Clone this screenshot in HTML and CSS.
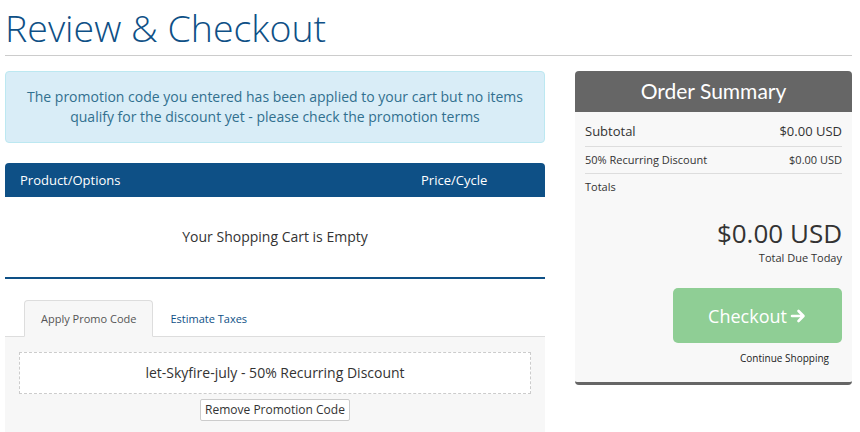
FILE: index.html
```html
<!DOCTYPE html>
<html lang="en">
<head>
    <meta charset="UTF-8">
    <meta name="viewport" content="width=device-width, initial-scale=1.0">
    <title>Review &amp; Checkout</title>
    <link rel="stylesheet" href="styles.css">
</head>
<body>

    <div class="page">
        <h1 class="page-title">Review &amp; Checkout</h1>

        <div class="checkout">
            <div class="cart">
                <div class="alert-info">
                    The promotion code you entered has been applied to your cart but no items
                    qualify for the discount yet - please check the promotion terms
                </div>

                <div class="cart-head">
                    <span class="col-product">Product/Options</span>
                    <span class="col-price">Price/Cycle</span>
                </div>
                <div class="cart-empty">Your Shopping Cart is Empty</div>

                <div class="tabs">
                    <span class="tab active">Apply Promo Code</span>
                    <span class="tab">Estimate Taxes</span>
                </div>
                <div class="tab-body">
                    <div class="promo-box">let-Skyfire-july - 50% Recurring Discount</div>
                    <button class="btn-remove" type="button">Remove Promotion Code</button>
                </div>
            </div>

            <div class="summary">
                <div class="summary-head">Order Summary</div>
                <div class="summary-body">
                    <div class="row row-sub">
                        <span>Subtotal</span>
                        <span>$0.00 USD</span>
                    </div>
                    <div class="row row-small">
                        <span>50% Recurring Discount</span>
                        <span>$0.00 USD</span>
                    </div>
                    <div class="row row-small row-last">
                        <span>Totals</span>
                    </div>
                    <div class="total">
                        <div class="total-amount">$0.00 USD</div>
                        <div class="total-label">Total Due Today</div>
                    </div>
                    <div class="actions">
                        <button class="btn-checkout" type="button">Checkout
                            <svg class="arrow" width="17" height="16" viewBox="0 0 17 16">
                                <path d="M2 8h11M8.5 3l5 5-5 5" fill="none" stroke="#fff" stroke-width="2.6" stroke-linecap="round" stroke-linejoin="round"/>
                            </svg>
                        </button>
                        <a class="continue" href="#">Continue Shopping</a>
                    </div>
                </div>
            </div>
        </div>
    </div>

</body>
</html>
```

FILE: styles.css
```css
body {
    margin: 0;
    font-family: "Open Sans", Arial, sans-serif;
    color: #333;
    background: #fff;
}
.page {
    padding: 0 8px 0 5px;
}
.page-title {
    font-family: "Open Sans", Lato, sans-serif;
    font-weight: 300;
    font-size: 37.5px;
    color: #0e5086;
    margin: 0;
    padding: 8px 0 7px 0;
    line-height: 40px;
    border-bottom: 1px solid #ccc;
}
.checkout {
    display: flex;
    gap: 30px;
    margin-top: 15px;
}
.cart {
    width: 540px;
}
.alert-info {
    background: #d9edf7;
    border: 1px solid #bce8f1;
    border-radius: 4px;
    color: #31708f;
    font-size: 14px;
    line-height: 20px;
    text-align: center;
    padding: 15px 18px;
}
.cart-head {
    display: flex;
    margin-top: 20px;
    background: #0e5086;
    color: #fff;
    font-size: 13px;
    height: 34px;
    align-items: center;
    border-radius: 4px 4px 0 0;
}
.col-product {
    flex: 1;
    padding-left: 15px;
}
.col-price {
    width: 124px;
}
.cart-empty {
    text-align: center;
    font-size: 14px;
    padding: 30px 0;
    line-height: 20px;
    border-bottom: 2px solid #0e5086;
}
.tabs {
    display: flex;
    margin-top: 21px;
    padding-left: 19px;
    border-bottom: 1px solid #ddd;
}
.tab {
    font-size: 11px;
    padding: 0 16px;
    line-height: 35px;
    color: #0e5086;
    border: 1px solid transparent;
    border-radius: 4px 4px 0 0;
    margin-bottom: -1px;
}
.tab.active {
    background: #f7f7f7;
    border-color: #ddd;
    border-bottom-color: #f7f7f7;
    color: #555;
}
.tab-body {
    background: #f7f7f7;
    padding: 15px 14px 12px;
    text-align: center;
}
.promo-box {
    background: #fff;
    border: 1px dashed #ccc;
    font-size: 14px;
    line-height: 20px;
    padding: 10px 0;
}
.btn-remove {
    margin-top: 5px;
    font-family: "Open Sans", Arial, sans-serif;
    font-size: 12px;
    color: #333;
    background: #fff;
    border: 1px solid #ccc;
    border-radius: 2px;
    padding: 3px 4px;
    line-height: 14px;
}
.summary {
    width: 277px;
    align-self: flex-start;
    border-radius: 4px;
    border-bottom: 3px solid #666;
    background: #f8f8f8;
}
.summary-head {
    background: #666;
    color: #fff;
    font-family: Lato, "Open Sans", sans-serif;
    font-weight: 400;
    font-size: 21px;
    text-align: center;
    height: 41px;
    line-height: 40px;
    border-radius: 4px 4px 0 0;
}
.summary-body {
    padding: 5px 10px 17px;
}
.row {
    display: flex;
    justify-content: space-between;
    border-bottom: 1px solid #ddd;
}
.row-sub {
    font-size: 13px;
    line-height: 29px;
}
.row-small {
    font-size: 11px;
    line-height: 26px;
}
.row-last {
    border-bottom: none;
}
.total {
    text-align: right;
    padding-top: 16px;
}
.total-amount {
    font-size: 26px;
    line-height: 34px;
}
.total-label {
    font-size: 11px;
    line-height: 16px;
}
.actions {
    text-align: right;
    padding-top: 22px;
}
.btn-checkout {
    width: 169px;
    height: 55px;
    background: #8fce95;
    border: none;
    border-radius: 5px;
    color: #fff;
    font-family: "Open Sans", Arial, sans-serif;
    font-size: 18px;
    display: inline-flex;
    align-items: center;
    justify-content: center;
    gap: 3px;
}
.continue {
    display: block;
    font-size: 10px;
    color: #222;
    text-decoration: none;
    margin-top: 8px;
    padding-right: 13px;
}
```
